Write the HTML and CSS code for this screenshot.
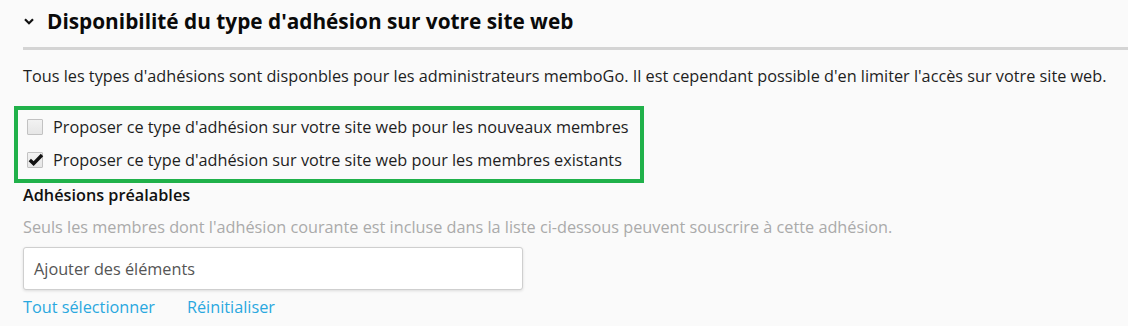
FILE: index.html
```html
<!DOCTYPE html>
<html lang="fr">
<head>
<meta charset="utf-8">
<title>Disponibilité</title>
<link rel="stylesheet" href="styles.css">
</head>
<body>
<section class="panel">
  <div class="header">
    <svg class="chevron" width="10" height="7" viewBox="0 0 10 7"><polyline points="1,1.2 5,5.2 9,1.2" fill="none" stroke="#111" stroke-width="2.2"/></svg>
    <h2 class="title">Disponibilité du type d'adhésion sur votre site web</h2>
  </div>
  <div class="divider"></div>
  <p class="desc">Tous les types d'adhésions sont disponbles pour les administrateurs memboGo. Il est cependant possible d'en limiter l'accès sur votre site web.</p>
  <div class="options">
    <label class="option"><span class="check"></span><span>Proposer ce type d'adhésion sur votre site web pour les nouveaux membres</span></label>
    <label class="option"><span class="check checked"><svg width="16" height="14" viewBox="0 0 16 14"><path d="M1.8 7 L5.6 10.6 L14 2" fill="none" stroke="#111" stroke-width="3.4"/></svg></span><span>Proposer ce type d'adhésion sur votre site web pour les membres existants</span></label>
  </div>
  <h3 class="subtitle">Adhésions préalables</h3>
  <p class="hint">Seuls les membres dont l'adhésion courante est incluse dans la liste ci-dessous peuvent souscrire à cette adhésion.</p>
  <div class="input">Ajouter des éléments</div>
  <div class="links"><a class="link">Tout sélectionner</a><a class="link">Réinitialiser</a></div>
</section>
</body>
</html>
```
FILE: styles.css
```css
html, body {
  margin: 0;
  padding: 0;
  background: #fafafa;
}
body {
  font-family: "Open Sans", "Liberation Sans", sans-serif;
  font-size: 16.25px;
  color: #1e1e1e;
}
.panel {
  padding-left: 23px;
}
.header {
  display: flex;
  align-items: center;
  height: 42px;
}
.chevron {
  margin-left: 1px;
  margin-right: 13px;
  margin-top: 1px;
}
.title {
  margin: 0;
  font-size: 20.8px;
  font-weight: 700;
  color: #0a0a0a;
  line-height: 24px;
}
.divider {
  margin-top: 5px;
  height: 3px;
  background: #d4d4d4;
}
.desc {
  margin: 15px 0 0;
  line-height: 22px;
}
.options {
  margin: 19px 0 0 -9px;
  width: 630px;
  box-sizing: border-box;
  border: 4px solid #20b14a;
  padding: 0 0 3px 9px;
}
.option {
  display: flex;
  align-items: center;
  height: 33px;
  gap: 10px;
}
.check {
  width: 14px;
  height: 14px;
  border: 1px solid #c2c2c2;
  background: linear-gradient(#f2f2f2, #e6e6e6);
  border-radius: 1px;
  position: relative;
  flex: none;
}
.check svg {
  position: absolute;
  left: 0;
  top: 0;
}
.subtitle {
  margin: 1px 0 0;
  font-size: 16.25px;
  font-weight: 600;
  line-height: 22px;
  color: #111;
}
.hint {
  margin: 10px 0 0;
  line-height: 22px;
  color: #aaa;
}
.input {
  margin-top: 9px;
  width: 500px;
  height: 43px;
  box-sizing: border-box;
  border: 1px solid #cfcfcf;
  border-radius: 3px;
  background: #fff;
  box-shadow: 0 1px 3px rgba(0,0,0,0.12);
  padding-left: 10px;
  display: flex;
  align-items: center;
  color: #555;
}
.links {
  margin-top: 6px;
  display: flex;
  gap: 32px;
  line-height: 22px;
}
.link {
  color: #2aa8df;
  cursor: pointer;
}
```
